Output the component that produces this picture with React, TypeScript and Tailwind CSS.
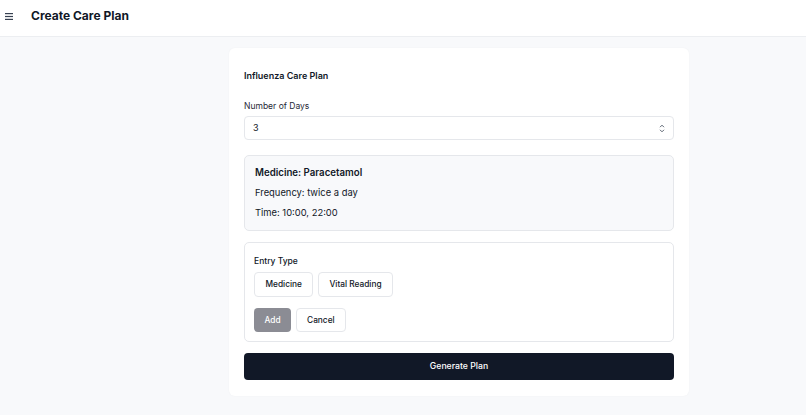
import React from "react";

export default function App() {
  return (
    <div className="min-h-screen bg-[#f8f9fb] text-[#111827]" style={{ fontFamily: "Inter, 'Noto Sans', sans-serif" }}>
      <header className="flex h-[37px] items-center border-b border-[#eceef1] bg-white pb-[4px]">
        <div className="flex w-[31px] items-center pl-[5px]">
          <svg width="8" height="7" viewBox="0 0 8 7" className="text-[#374151]">
            <rect x="0" y="0" width="8" height="1.2" fill="currentColor" />
            <rect x="0" y="2.9" width="8" height="1.2" fill="currentColor" />
            <rect x="0" y="5.8" width="8" height="1.2" fill="currentColor" />
          </svg>
        </div>
        <h1 className="text-[12px] font-bold">Create Care Plan</h1>
      </header>
      <main className="flex justify-center pl-[112px] pt-[11px]">
        <div className="w-[460px] rounded-md bg-white px-[15px] pb-[16px] pt-[22px] shadow-[0_0_2px_rgba(0,0,0,0.04)]">
          <h2 className="text-[9px] font-semibold leading-[12px]">Influenza Care Plan</h2>
          <label className="mt-[18px] block text-[8.5px] leading-[12px] text-[#1f2937]">Number of Days</label>
          <div className="mt-[4px] flex h-[24px] items-center justify-between rounded-[4px] border border-[#e5e7eb] bg-white pl-[8px] pr-[8px]">
            <span className="text-[9px]">3</span>
            <svg width="6" height="9" viewBox="0 0 6 9" className="text-[#4b5563]">
              <path d="M1 3.2 L3 1.2 L5 3.2 M1 5.8 L3 7.8 L5 5.8" fill="none" stroke="currentColor" strokeWidth="0.9" />
            </svg>
          </div>
          <div className="mt-[15px] flex flex-col gap-[8px] rounded-[5px] border border-[#e5e7eb] bg-[#f8f9fb] px-[10px] pb-[11px] pt-[11px]">
            <div className="text-[9.7px] font-semibold leading-[12px]">Medicine: Paracetamol</div>
            <div className="text-[9.4px] leading-[12px]">Frequency: twice a day</div>
            <div className="text-[9.4px] leading-[12px]">Time: 10:00, 22:00</div>
          </div>
          <div className="mt-[11px] rounded-[5px] border border-[#e5e7eb] bg-white px-[9px] pb-[9px] pt-[12px]">
            <div className="text-[8.5px] font-medium leading-[12px]">Entry Type</div>
            <div className="mt-[5px] flex gap-[5px]">
              <button className="h-[25px] rounded-[4px] border border-[#e5e7eb] bg-white px-[10.5px] text-[8.3px] font-medium">Medicine</button>
              <button className="h-[25px] rounded-[4px] border border-[#e5e7eb] bg-white px-[10px] text-[8.3px] font-medium">Vital Reading</button>
            </div>
            <div className="mt-[11px] flex gap-[5px]">
              <button className="h-[24px] rounded-[4px] bg-[#8b8c94] px-[10.5px] text-[8.3px] font-medium text-white">Add</button>
              <button className="h-[24px] rounded-[4px] border border-[#e5e7eb] bg-white px-[10px] text-[8.3px] font-medium">Cancel</button>
            </div>
          </div>
          <button className="mt-[11px] h-[27px] w-full rounded-[4px] bg-[#111827] text-[8.7px] font-medium text-white">Generate Plan</button>
        </div>
      </main>
    </div>
  );
}
